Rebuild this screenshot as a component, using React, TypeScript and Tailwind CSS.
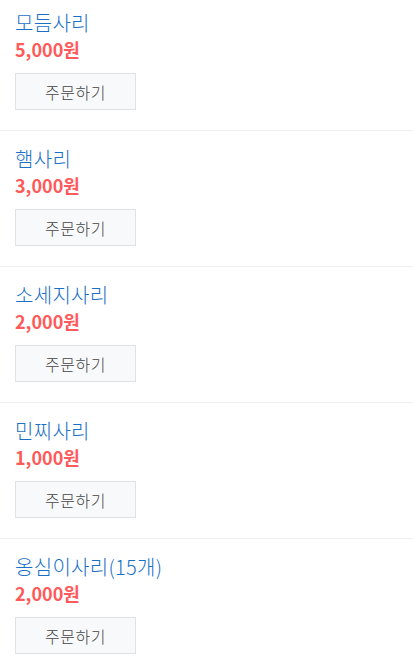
const items = [
  { name: "모듬사리", price: "5,000원" },
  { name: "햄사리", price: "3,000원" },
  { name: "소세지사리", price: "2,000원" },
  { name: "민찌사리", price: "1,000원" },
  { name: "옹심이사리(15개)", price: "2,000원" },
];

export default function App() {
  return (
    <div className="-mt-[5px] bg-white font-['Noto_Sans_CJK_KR','Noto_Sans',sans-serif]">
      <ul>
        {items.map((item) => (
          <li key={item.name} className="border-b border-[#eeeeee] px-[15px] pb-[20px] pt-[14px]">
            <div className="text-[20px] font-light leading-[28px] tracking-[0.3px] text-[#1a70c6]">{item.name}</div>
            <div className="text-[18px] font-bold leading-[24px] text-[#ff5a5a]">{item.price}</div>
            <button
              type="button"
              className="mt-[12px] flex h-[37px] w-[121px] items-center justify-center border border-[#dee2e6] bg-[#f8f9fa] text-[16px] font-light tracking-[0.5px] text-[#444444]"
            >
              주문하기
            </button>
          </li>
        ))}
      </ul>
    </div>
  );
}
